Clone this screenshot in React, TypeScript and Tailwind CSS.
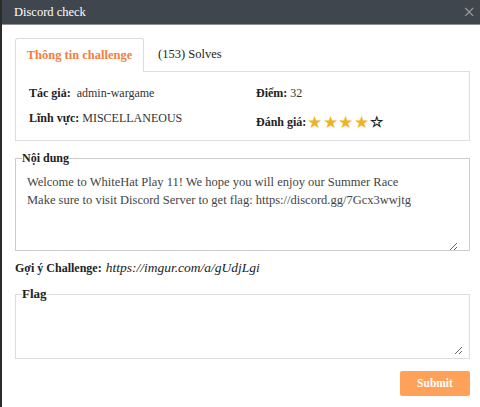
import React from 'react';

const App: React.FC = () => {
  return (
    <div className="w-[480px] h-[407px] flex bg-white font-['Liberation_Serif',serif] text-[12px] text-[#333]">
      <div className="w-[2px] bg-[#2b2b2b]"></div>
      <div className="flex-1 flex flex-col">
        {/* Header */}
        <div className="h-[25px] bg-[#40464e] border-b border-[#8e9297] flex items-center justify-between pl-[12px] pr-[5px]">
          <span className="text-white text-[12.5px]">Discord check</span>
          <span className="text-[#9aa0a6] text-[21px] leading-none">×</span>
        </div>

        <div className="pl-[13px] pr-[10px] flex flex-col">
          {/* Tabs */}
          <div className="mt-[13px] flex items-end h-[34px]">
            <div className="h-[34px] w-[129px] border border-b-0 border-[#ddd] rounded-t-[3px] bg-white flex items-center justify-center">
              <span className="text-[#f57d3c] font-bold text-[12.5px]">Thông tin challenge</span>
            </div>
            <div className="flex-1 h-[34px] border-b border-[#ddd] flex items-center pl-[14px]">
              <span className="text-[#222] text-[12.5px]">(153) Solves</span>
            </div>
          </div>

          {/* Info */}
          <div className="h-[69px] border border-t-0 border-[#ddd] grid grid-cols-2 pl-[13px] pt-[13px]">
            <div className="flex flex-col gap-[9px]">
              <div className="h-[16px] flex items-center">
                <span className="font-bold text-[#222]">Tác giả:</span>
                <span className="ml-[6px]">admin-wargame</span>
              </div>
              <div className="h-[16px] flex items-center">
                <span className="font-bold text-[#222]">Lĩnh vực:</span>
                <span className="ml-[3px]">MISCELLANEOUS</span>
              </div>
            </div>
            <div className="flex flex-col gap-[13px] pl-[7px]">
              <div className="h-[16px] flex items-center">
                <span className="font-bold text-[#222]">Điểm:</span>
                <span className="ml-[3px]">32</span>
              </div>
              <div className="h-[16px] flex items-center">
                <span className="font-bold text-[#222]">Đánh giá:</span>
                <span className="text-[#f0b323] text-[17px] leading-none tracking-[0.5px] ml-[1px]">★★★★</span>
                <span className="text-[#222] text-[15px] leading-none font-bold ml-[1px]">☆</span>
              </div>
            </div>
          </div>

          {/* Nội dung */}
          <fieldset className="mt-[10px] border border-[#ccc] h-[100px] px-[11px]">
            <legend className="font-bold text-[#222] ml-[-5px] px-0 leading-[14px]">Nội dung</legend>
            <textarea
              readOnly
              className="w-full h-[78px] resize-y outline-none border-0 text-[12.5px] leading-[18px] text-[#444] font-['Liberation_Serif',serif] mt-[8px] block"
              defaultValue={'Welcome to WhiteHat Play 11! We hope you will enjoy our Summer Race\nMake sure to visit Discord Server to get flag: https://discord.gg/7Gcx3wwjtg'}
            />
          </fieldset>

          {/* Hint */}
          <div className="mt-[9px] h-[16px] flex items-center">
            <span className="font-bold text-[#222]">Gợi ý Challenge:</span>
            <span className="italic ml-[4px] text-[#222] text-[13.5px]">https://imgur.com/a/gUdjLgi</span>
          </div>

          {/* Flag */}
          <fieldset className="mt-[11px] border border-[#ddd] h-[72px] px-[6px]">
            <legend className="font-bold text-[#222] text-[13px] leading-[14px]">Flag</legend>
            <textarea
              className="w-full h-[54px] resize-y outline-none border-0 block font-['Liberation_Serif',serif]"
            />
          </fieldset>

          {/* Submit */}
          <div className="flex justify-end mt-[12px]">
            <button className="w-[70px] h-[25px] bg-[#ffa158] text-white font-bold rounded-[2px] text-[11.5px]">Submit</button>
          </div>
        </div>
      </div>
    </div>
  );
};

export default App;
